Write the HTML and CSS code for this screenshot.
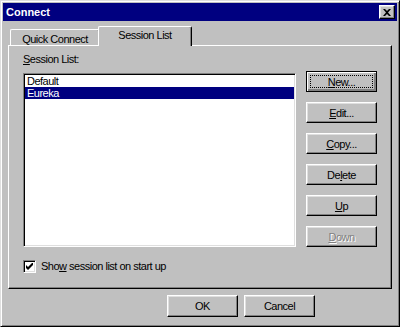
FILE: index.html
```html
<!DOCTYPE html>
<html lang="en">
<head>
  <meta charset="UTF-8">
  <title>Connect</title>
  <link rel="stylesheet" href="styles.css">
</head>
<body>
  <div class="window">
    <div class="titlebar">
      <span class="title">Connect</span>
      <button class="close" title="Close">
        <svg width="8" height="7" viewBox="0 0 8 7">
          <path d="M0 0h2l2 2 2-2h2L5 3.5 8 7H6L4 5 2 7H0l3-3.5z" fill="#000"/>
        </svg>
      </button>
    </div>

    <div class="content">
      <div class="tabs">
        <div class="tab">Quick Connect</div>
        <div class="tab active">Session List</div>
      </div>

      <div class="panel">
        <div class="left">
          <div class="label"><u>S</u>ession List:</div>
          <div class="listbox">
            <div class="item">Default</div>
            <div class="item selected">Eureka</div>
          </div>
          <label class="check">
            <span class="box">
              <svg width="7" height="7" viewBox="0 0 7 7">
                <path d="M0 2v3l2 2 5-5V-1L2 4z" fill="#000"/>
              </svg>
            </span>
            <span>Sho<u>w</u> session list on start up</span>
          </label>
        </div>

        <div class="side">
          <button class="btn default"><span class="focus"><u>N</u>ew...</span></button>
          <button class="btn"><u>E</u>dit...</button>
          <button class="btn"><u>C</u>opy...</button>
          <button class="btn">De<u>l</u>ete</button>
          <button class="btn"><u>U</u>p</button>
          <button class="btn disabled"><u>D</u>own</button>
        </div>
      </div>

      <div class="footer">
        <button class="btn wide">OK</button>
        <button class="btn wide">Cancel</button>
      </div>
    </div>
  </div>
</body>
</html>
```

FILE: styles.css
```css
* {
  box-sizing: border-box;
}
body {
  margin: 0;
  background-color: #c0c0c0;
  font-family: "Liberation Sans", Arial, sans-serif;
  font-size: 11px;
  letter-spacing: -0.5px;
  color: #000;
}

.window {
  width: 400px;
  height: 327px;
  padding: 2px;
  background-color: #c0c0c0;
  border: 1px solid;
  border-color: #dfdfdf #000 #000 #dfdfdf;
  box-shadow: inset 1px 1px #fff, inset -1px -1px #808080;
}

.titlebar {
  height: 18px;
  background-color: #000080;
  display: flex;
  align-items: center;
  justify-content: space-between;
  padding: 0 2px 0 3px;
}
.title {
  color: #fff;
  font-weight: bold;
  letter-spacing: 0;
}
.close {
  width: 16px;
  height: 14px;
  padding: 0;
  background-color: #c0c0c0;
  border: 1px solid;
  border-color: #fff #000 #000 #fff;
  box-shadow: inset -1px -1px #808080, inset 1px 1px #dfdfdf;
  display: flex;
  align-items: center;
  justify-content: center;
}

.content {
  padding: 0 5px;
}

.tabs {
  display: flex;
  align-items: flex-end;
  height: 19px;
  margin-top: 6px;
  padding-left: 2px;
  position: relative;
  z-index: 1;
  margin-bottom: -1px;
}
.tab {
  width: 90px;
  height: 16px;
  text-align: center;
  line-height: 15px;
  padding-top: 2px;
  border: 1px solid;
  border-bottom: none;
  border-color: #fff #000 #000 #fff;
  border-radius: 2px 2px 0 0;
  box-shadow: inset -1px 0 #808080;
  background-color: #c0c0c0;
  margin-bottom: 1px;
}
.tab.active {
  width: 94px;
  height: 20px;
  margin: 0 -2px;
  padding-top: 1px;
  line-height: 14px;
  margin-bottom: 0;
}

.panel {
  height: 244px;
  display: flex;
  gap: 10px;
  padding: 7px 0 0 14px;
  border: 1px solid;
  border-color: #fff #000 #000 #fff;
  box-shadow: inset -1px -1px #808080;
}

.left {
  width: 273px;
}
.label {
  line-height: 13px;
}
.listbox {
  margin-top: 7px;
  height: 174px;
  background-color: #fff;
  border: 1px solid;
  border-color: #808080 #fff #fff #808080;
  box-shadow: inset 1px 1px #000, inset -1px -1px #dfdfdf;
  padding: 1px;
}
.item {
  line-height: 12px;
  height: 12px;
  padding-left: 2px;
}
.item.selected {
  background-color: #000080;
  color: #fff;
}

.check {
  display: flex;
  align-items: center;
  gap: 5px;
  margin-top: 13px;
  line-height: 13px;
}
.box {
  width: 13px;
  height: 13px;
  background-color: #fff;
  border: 1px solid;
  border-color: #808080 #fff #fff #808080;
  box-shadow: inset 1px 1px #000, inset -1px -1px #dfdfdf;
  display: flex;
  align-items: center;
  justify-content: center;
}

.side {
  display: flex;
  flex-direction: column;
  gap: 10px;
  margin-top: 18px;
}

.btn {
  width: 71px;
  height: 21px;
  padding: 0;
  font-family: inherit;
  font-size: 11px;
  letter-spacing: -0.5px;
  color: #000;
  background-color: #c0c0c0;
  border: 1px solid;
  border-color: #fff #000 #000 #fff;
  box-shadow: inset -1px -1px #808080, inset 1px 1px #dfdfdf;
  display: flex;
  align-items: center;
  justify-content: center;
}
.btn.default {
  border: 1px solid #000;
  box-shadow: inset 1px 1px #fff, inset -2px -2px #808080, inset -1px -1px #000;
  padding: 3px;
}
.focus {
  width: 100%;
  height: 100%;
  border: 1px dotted #000;
  display: flex;
  align-items: center;
  justify-content: center;
}
.btn.disabled {
  color: #808080;
  text-shadow: 1px 1px #fff;
}

.footer {
  display: flex;
  justify-content: flex-end;
  gap: 6px;
  margin-top: 6px;
  padding-right: 77px;
}
.btn.wide {
  height: 22px;
}
```
